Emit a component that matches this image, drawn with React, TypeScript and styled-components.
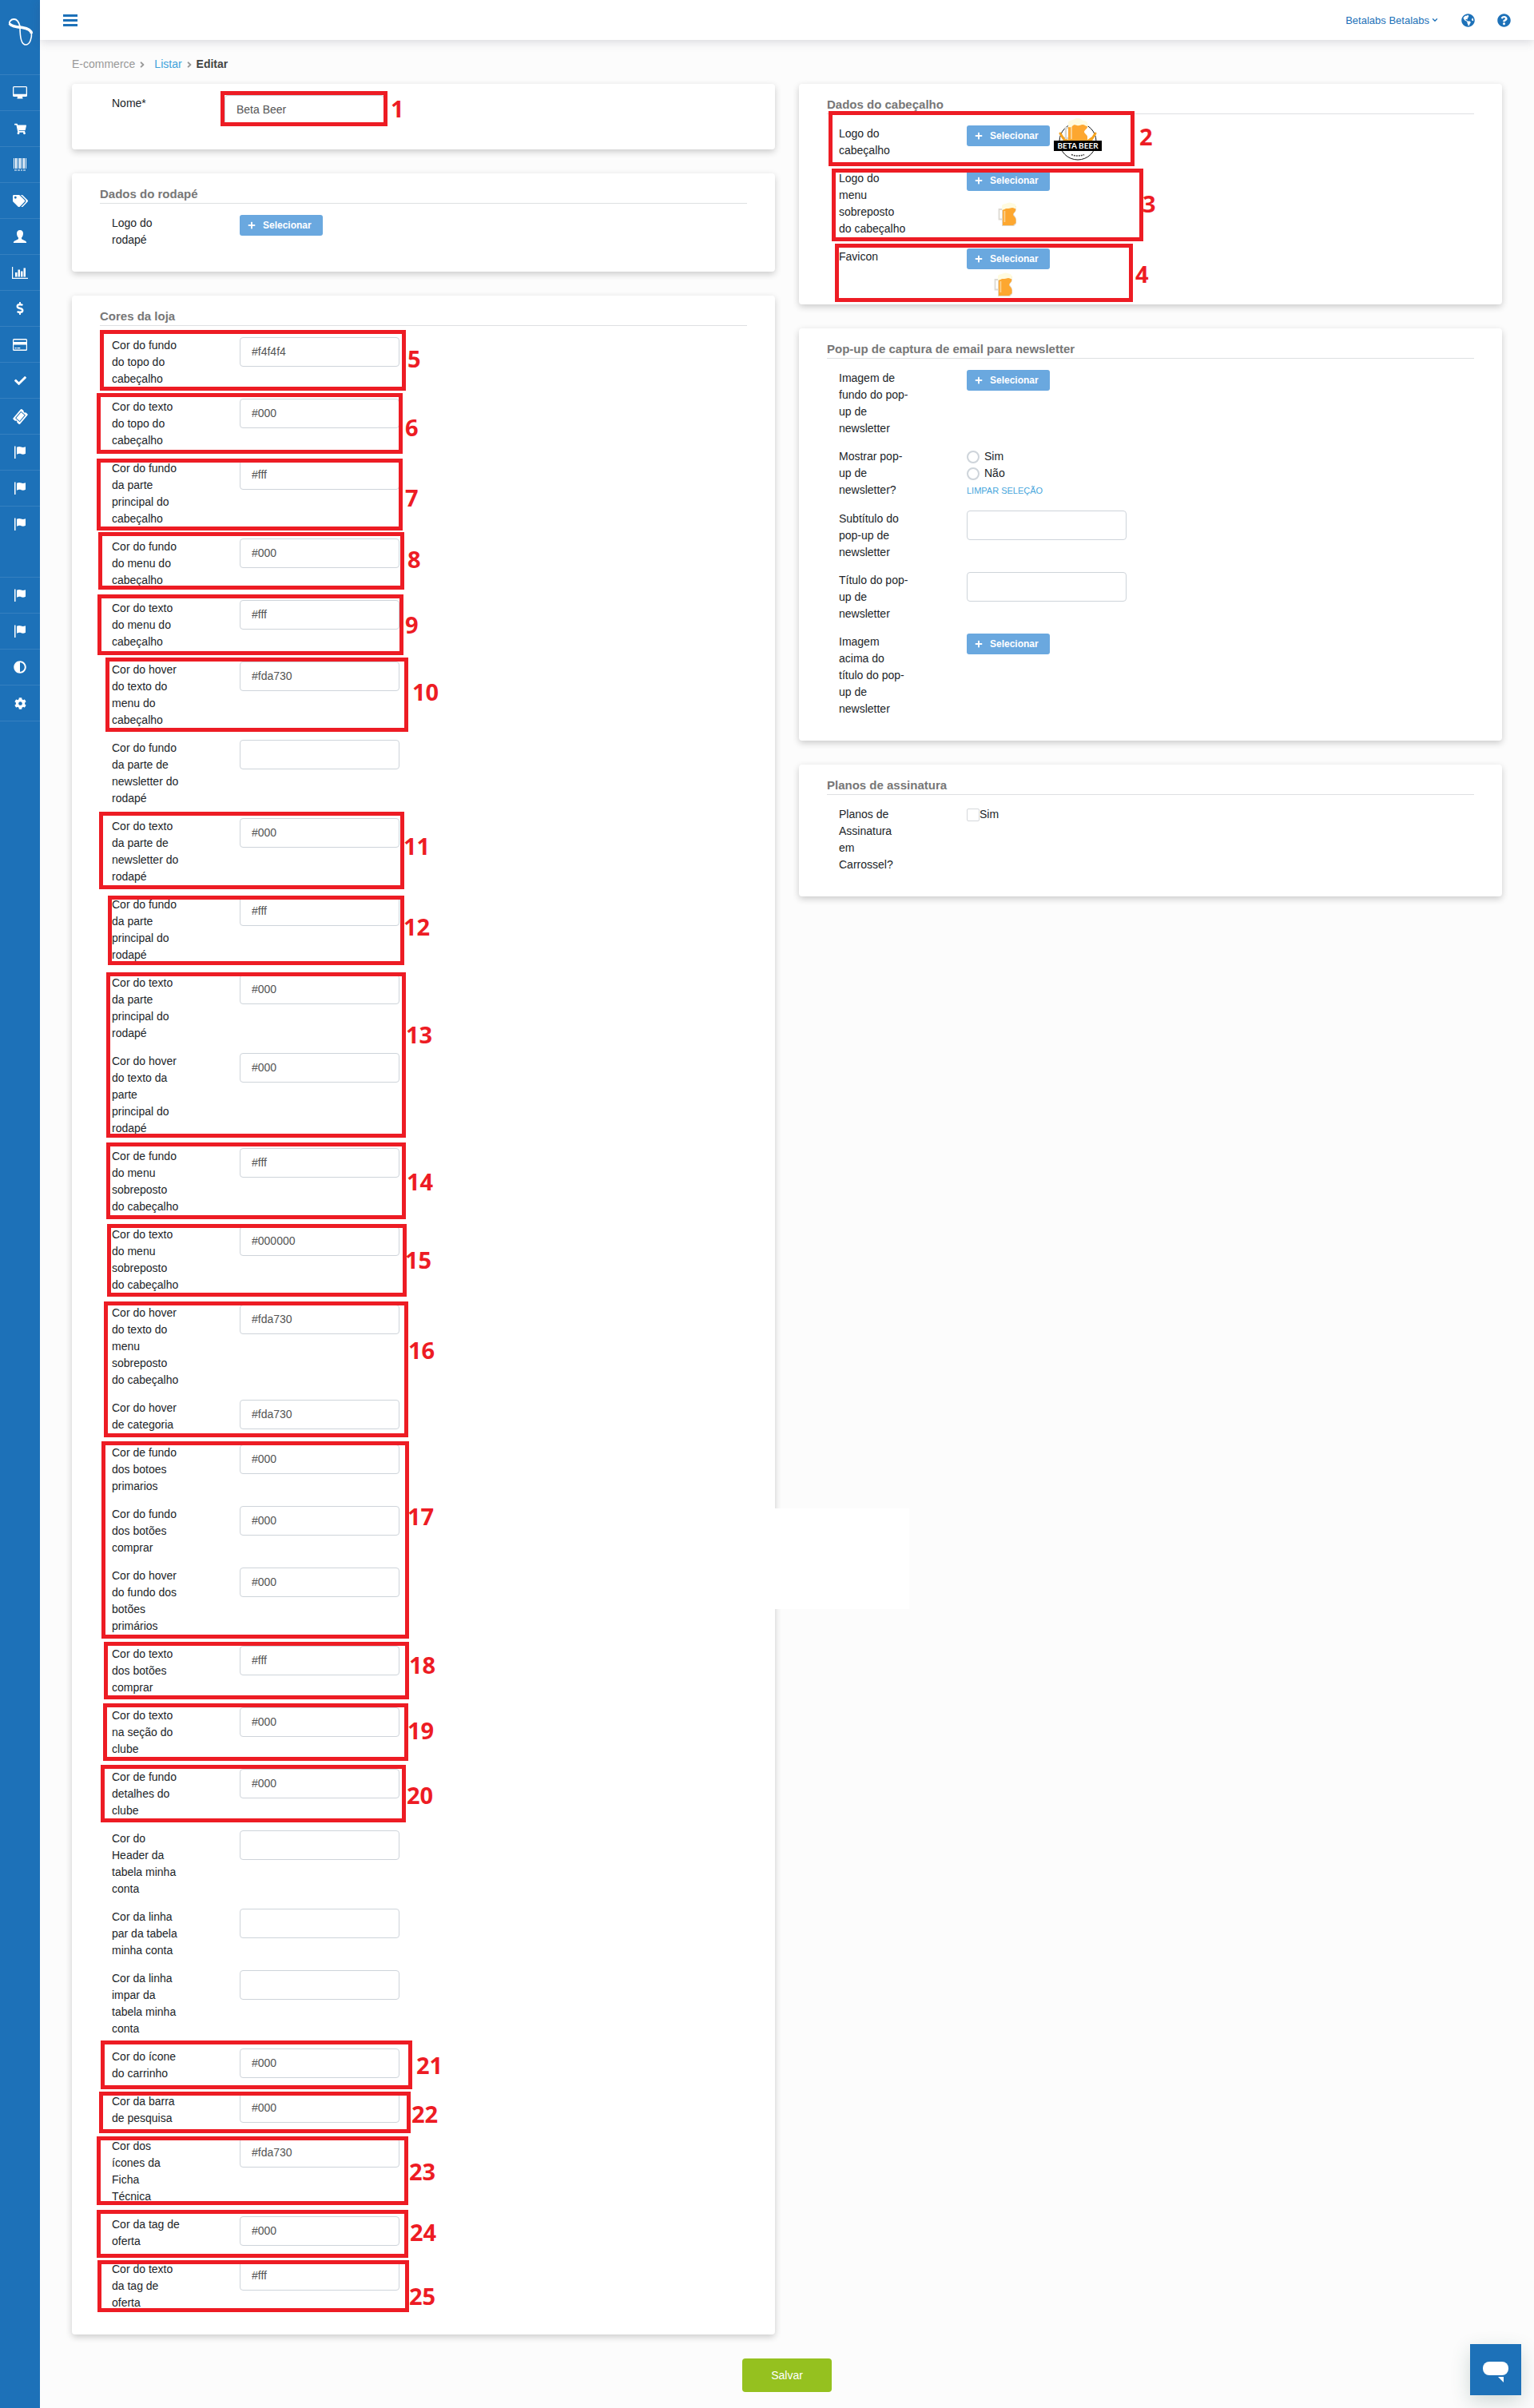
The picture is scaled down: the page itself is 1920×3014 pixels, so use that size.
import React from "react";
import styled, { createGlobalStyle } from "styled-components";
import { ChevronDown } from "lucide-react";
import {
  FaAdjust,
  FaAngleRight,
  FaCheck,
  FaCog,
  FaDollarSign,
  FaGlobeAmericas,
  FaPlus,
  FaQuestionCircle,
  FaShoppingCart,
  FaTags,
  FaTicketAlt,
} from "react-icons/fa";

const BLUE = "#1d71b8";
const RED = "#ed1c24";

const GlobalStyle = createGlobalStyle`
  *, *::before, *::after { box-sizing: border-box; }
  body {
    margin: 0;
    background: #fcfcfc;
    color: #212529;
    font-family: "Liberation Sans", Arial, sans-serif;
    font-size: 14px;
    line-height: 21px;
  }
  button, input { font: inherit; }
`;

/* ---------- shell ---------- */

const Shell = styled.div`
  position: relative;
  display: flex;
  align-items: stretch;
  min-height: 100vh;
`;

const Sidebar = styled.nav`
  flex: 0 0 50px;
  background: ${BLUE};
  color: #fff;
`;

const Brand = styled.a`
  display: block;
  height: 93px;
  svg {
    display: block;
  }
`;

const Menu = styled.ul`
  margin: 0;
  padding: 0;
  list-style: none;
`;

const MenuItem = styled.li<{ $blank?: boolean }>`
  height: ${(p) => (p.$blank ? 44 : 45)}px;
  border-top: ${(p) => (p.$blank ? "0" : "1px solid #3580c0")};
  &:last-child {
    height: 46px;
    border-bottom: 1px solid #3580c0;
  }
`;

const MenuLink = styled.a`
  display: flex;
  align-items: center;
  justify-content: center;
  height: 44px;
  color: #fff;
`;

const Page = styled.div`
  flex: 1;
  min-width: 0;
  display: flex;
  flex-direction: column;
`;

const TopBar = styled.header`
  display: flex;
  align-items: center;
  justify-content: space-between;
  height: 50px;
  padding: 0 29px;
  background: #fff;
  box-shadow: 0 2px 12px rgba(60, 60, 90, 0.2);
`;

const Burger = styled.button`
  display: flex;
  flex-direction: column;
  gap: 3px;
  padding: 0;
  border: 0;
  background: none;
  cursor: pointer;
  span {
    width: 18px;
    height: 3px;
    background: ${BLUE};
  }
`;

const TopLinks = styled.div`
  display: flex;
  align-items: center;
  color: ${BLUE};
`;

const UserMenu = styled.button`
  display: flex;
  align-items: center;
  gap: 2px;
  margin-right: 28px;
  padding: 0;
  border: 0;
  background: none;
  color: ${BLUE};
  font-size: 13px;
`;

const TopIcon = styled.a`
  display: flex;
  color: ${BLUE};
  & + & {
    margin-left: 28px;
  }
`;

const Main = styled.main`
  padding: 20px 40px;
`;

const Crumbs = styled.nav`
  display: flex;
  align-items: center;
  height: 21px;
  margin-bottom: 14px;
  color: #999;
  svg {
    margin: 0 3px;
  }
  a {
    margin-left: 6px;
    color: #3fa2db;
    text-decoration: none;
  }
  strong {
    color: #444;
  }
`;

const Columns = styled.div`
  display: grid;
  grid-template-columns: repeat(2, minmax(0, 1fr));
  gap: 30px;
  align-items: start;
`;

const Column = styled.div`
  display: grid;
  gap: 30px;
`;

/* ---------- panels and rows ---------- */

const Panel = styled.section`
  padding: 0 35px 15px;
  border-radius: 4px;
  background: #fff;
  box-shadow: 0 3px 8px rgba(0, 0, 0, 0.2);
`;

const PanelTitle = styled.h2`
  margin: 0 0 14px;
  padding: 15px 0 1px;
  border-bottom: 1px solid #dee0e2;
  color: #777;
  font-size: 15px;
  line-height: 21px;
`;

const Plain = styled.div`
  padding-top: 14px;
`;

const Row = styled.div<{ $labelCol?: number; $min?: number }>`
  display: grid;
  grid-template-columns: ${(p) => p.$labelCol ?? 160}px 1fr;
  min-height: ${(p) => p.$min ?? 39}px;
  margin-bottom: 14px;
  padding-left: 15px;
`;

const labelStyle = `
  display: block;
  width: 87px;
  white-space: pre-line;
`;

const Label = styled.label`
  ${labelStyle}
`;

const LabelText = styled.div`
  ${labelStyle}
`;

const Control = styled.div`
  position: relative;
  min-width: 0;
`;

const TextInput = styled.input`
  display: block;
  width: 200px;
  max-width: 100%;
  height: 37px;
  padding: 0 14px 1px;
  border: 1px solid #ced4da;
  border-radius: 4px;
  background: #fff;
  color: #555;
`;

const SelectButton = styled.button`
  display: flex;
  align-items: center;
  gap: 9px;
  width: 104px;
  height: 26px;
  padding: 0 10px;
  border: 0;
  border-radius: 3px;
  background: #6aa8df;
  color: #fff;
  font-size: 12px;
  font-weight: bold;
`;

const Preview = styled.span<{ $left: number; $top: number }>`
  position: absolute;
  left: ${(p) => p.$left}px;
  top: ${(p) => p.$top}px;
  svg {
    display: block;
  }
`;

const Choice = styled.label<{ $gap: number }>`
  display: flex;
  align-items: center;
  gap: ${(p) => p.$gap}px;
  height: 21px;
  input {
    appearance: none;
    width: 16px;
    height: 16px;
    margin: 0;
    border: 2px solid #ced4da;
    border-radius: 50%;
    background: #fff;
  }
  input[type="checkbox"] {
    border: 1px solid #d5d8db;
    border-radius: 2px;
  }
`;

const ClearLink = styled.a`
  color: #48a6dc;
  font-size: 11px;
  text-decoration: none;
`;

const Footer = styled.div`
  display: flex;
  justify-content: center;
  margin-top: 30px;
`;

const SaveButton = styled.button`
  width: 112px;
  height: 42px;
  border: 0;
  border-radius: 4px;
  background: #95c11f;
  color: #fff;
`;

const ChatButton = styled.button`
  position: fixed;
  right: 16px;
  bottom: 16px;
  width: 64px;
  height: 64px;
  padding: 0;
  border: 0;
  background: ${BLUE};
  box-shadow: 0 8px 24px rgba(30, 80, 70, 0.2);
  svg {
    display: block;
  }
`;

/* ---------- numbered marks drawn over the page ---------- */

const Mark = styled.div<{ $x: number; $y: number; $w: number; $h: number }>`
  position: absolute;
  left: ${(p) => p.$x}px;
  top: ${(p) => p.$y}px;
  width: ${(p) => p.$w}px;
  height: ${(p) => p.$h}px;
  border: 5px solid ${RED};
  pointer-events: none;
`;

const MarkNumber = styled.span<{ $x: number; $y: number }>`
  position: absolute;
  left: ${(p) => p.$x}px;
  top: ${(p) => p.$y}px;
  color: ${RED};
  font: bold 29px/21px "Open Sans", "Noto Sans", sans-serif;
`;

const BlankPatch = styled.div`
  position: absolute;
  left: 960px;
  top: 1888px;
  width: 178px;
  height: 126px;
  background: #fff;
`;

/* left, top, right, bottom of the frame; left and top of the number */
const marks: number[][] = [
  [276, 114, 485, 158, 489, 125],
  [1037, 139, 1420, 208, 1426, 160],
  [1041, 211, 1431, 302, 1430, 244],
  [1045, 305, 1418, 378, 1421, 332],
  [125, 413, 508, 489, 510, 438],
  [121, 492, 504, 568, 507, 524],
  [121, 574, 504, 664, 507, 612],
  [123, 666, 506, 738, 510, 689],
  [122, 744, 505, 820, 507, 771],
  [132, 823, 511, 916, 516, 855],
  [124, 1016, 506, 1113, 505, 1048],
  [135, 1121, 506, 1208, 505, 1149],
  [133, 1217, 508, 1424, 508, 1284],
  [133, 1430, 508, 1526, 509, 1468],
  [134, 1532, 509, 1623, 507, 1566],
  [130, 1629, 511, 1799, 511, 1679],
  [127, 1804, 512, 2051, 510, 1887],
  [130, 2055, 512, 2127, 512, 2073],
  [129, 2132, 511, 2204, 510, 2155],
  [126, 2209, 508, 2281, 509, 2236],
  [126, 2554, 516, 2615, 521, 2574],
  [124, 2618, 514, 2670, 515, 2635],
  [121, 2674, 511, 2760, 512, 2707],
  [121, 2766, 511, 2826, 513, 2783],
  [122, 2829, 512, 2894, 512, 2863],
];

/* ---------- drawings ---------- */

const BrandMark = () => (
  <svg width="50" height="62" viewBox="0 0 50 62" fill="none" stroke="#fff">
    <path d="M25 33C23.500 27 21 24 17.500 24C13.500 24 11 27.500 12 30C13 32.500 17 33 22 34" strokeWidth="1.800" />
    <path d="M12 29.500C14 33 20 33.500 28 34.500C34 35.500 39 37.500 39.500 42" strokeWidth="3.400" />
    <path d="M25 34C25 44 26.500 56 32 56C37.500 56 40 48 39.500 40" strokeWidth="1.600" />
  </svg>
);

const Desktop = () => (
  <svg width="18" height="16" viewBox="0 0 18 16" fill="currentColor">
    <path fillRule="evenodd" d="M1.500 0h15A1.500 1.500 0 0 1 18 1.500v10a1.500 1.500 0 0 1-1.500 1.500H12l.6 2.400H5.400L6 13H1.500A1.500 1.500 0 0 1 0 11.500v-10A1.500 1.500 0 0 1 1.500 0zM1.300 1.300v8.400h15.400V1.300z" />
  </svg>
);

const Barcode = () => (
  <svg width="18" height="16" viewBox="0 0 18 16" fill="currentColor">
    <path d="M1 0h1v13H1zM3 0h2v13H3zM6 0h1v13H6zM8 0h2v13H8zM11 0h1v13h-1zM13 0h2v13h-2zM16 0h1v13h-1zM2 14.500h3v1H2zM6 14.500h3v1H6zM10 14.500h2v1h-2zM13 14.500h3v1h-3z" />
  </svg>
);

const Person = () => (
  <svg width="18" height="16" viewBox="0 0 18 16" fill="currentColor">
    <path d="M9 0c2.600 0 4 1.700 4 4.200 0 2-.8 4-2 5.200v1.300c0 .6 1.500 1.300 3.500 2.200 1.800.8 2.700 1.300 2.700 3.100H.8c0-1.800.9-2.300 2.700-3.100 2-.9 3.500-1.600 3.500-2.200V9.400C5.800 8.200 5 6.200 5 4.200 5 1.700 6.400 0 9 0z" />
  </svg>
);

const Bars = () => (
  <svg width="20" height="15" viewBox="0 0 20 15" fill="currentColor">
    <path d="M0 0h1.200v13.700H20V15H0zM4 7h2.500v5.500H4zM7.500 3.500H10v9H7.500zM11 5.500h2.500v7H11zM14.500 1.500H17v11h-2.500z" />
  </svg>
);

const Card = () => (
  <svg width="18" height="15" viewBox="0 0 18 15" fill="currentColor">
    <path fillRule="evenodd" d="M1.500 0h15A1.500 1.500 0 0 1 18 1.500v12a1.500 1.500 0 0 1-1.500 1.500h-15A1.500 1.500 0 0 1 0 13.500v-12A1.500 1.500 0 0 1 1.500 0zM1.200 1.500V4h15.600V1.500zM1.200 7.500v6h15.600v-6zM2.500 11h2.200v1.200H2.500zM5.500 11h3.800v1.200H5.500z" />
  </svg>
);

const Flag = () => (
  <svg width="16" height="16" viewBox="0 0 16 16" fill="currentColor">
    <path d="M1 .5h1.500V16H1zM4 1.800C6 .6 8 .7 9.500 1.500c1.800.8 3.500.4 5.500-.3v8.600c-2 .9-3.700 1.200-5.500.4C8 9.500 6 9.500 4 10.700z" />
  </svg>
);

const Mug = ({ size = 30 }: { size?: number }) => (
  <svg width={size} height={size} viewBox="0 0 30 30">
    <path d="M7 9H2.500v12.500H7" fill="none" stroke="#ddd9d2" strokeWidth="1.800" />
    <path d="M6 5h18v4c0 3-3 4-3 6s3 3.500 3 7v5l-3 3H6z" fill="#e2d8c8" />
    <path d="M7 6h16v4c0 2.500-3 3.500-3 5.500s3.500 3 3.500 7V26L20 29H7z" fill="#fda730" />
    <path d="M8.500 11h1.800v14H8.500z" fill="#fcd08c" />
    <path d="M6 9.500V4.500C7 2 10 2.500 12 1.500S16 0 18 1s5 .5 5.500 3.500L24 8c-2 .8-3-1-5-1s-2.500 1-5 1-3-.5-4 .5-3 1.500-4 1z" fill="#fffbe0" />
  </svg>
);

const Badge = () => (
  <svg width="62" height="53" viewBox="0 0 62 53">
    <circle cx="31" cy="29" r="23" fill="#fff" stroke="#111" strokeWidth="1" />
    <path d="M9 19l5 8M53 19l-5 8M12 24l7 5M50 24l-7 5" stroke="#f5a21f" strokeWidth="3" strokeLinecap="round" />
    <path d="M20 12h-4v13h5" fill="none" stroke="#d8d8d4" strokeWidth="2.500" />
    <path d="M19 6h24v5c0 2-4 4-4 6s4 4 4 6v5H19z" fill="#fda730" />
    <path d="M22 10h2v16h-2z" fill="#fcd08c" />
    <path d="M19 11V5c2-3 5-2 8-4s7-1 9 1 6 0 7 4l1 4c-3 1-4-2-7-2s-4 2-7 1-4-1-6 1-3 1-5 1z" fill="#fffbe0" />
    <rect x="1" y="28" width="60" height="13" fill="#000" />
    <text x="31" y="38" textAnchor="middle" fill="#fff" fontFamily="Lato, sans-serif" fontWeight="bold" fontSize="10">
      BETA BEER
    </text>
    <path d="M23 45.500c5 2 11 2 16 0" fill="none" stroke="#444" strokeWidth="1.500" strokeDasharray="2 1" />
  </svg>
);

/* ---------- content ---------- */

const menu: { name: string; icon: React.ReactNode }[] = [
  { name: "Painel", icon: <Desktop /> },
  { name: "Pedidos", icon: <FaShoppingCart size={15} /> },
  { name: "Produtos", icon: <Barcode /> },
  { name: "Etiquetas", icon: <FaTags size={19} /> },
  { name: "Clientes", icon: <Person /> },
  { name: "Relatórios", icon: <Bars /> },
  { name: "Financeiro", icon: <FaDollarSign size={16} /> },
  { name: "Pagamentos", icon: <Card /> },
  { name: "Aprovações", icon: <FaCheck size={15} /> },
  { name: "Cupons", icon: <FaTicketAlt size={17} transform="rotate(-50)" /> },
  { name: "Marcador 1", icon: <Flag /> },
  { name: "Marcador 2", icon: <Flag /> },
  { name: "Marcador 3", icon: <Flag /> },
  { name: "", icon: null },
  { name: "Marcador 4", icon: <Flag /> },
  { name: "Marcador 5", icon: <Flag /> },
  { name: "Aparência", icon: <FaAdjust size={16} /> },
  { name: "Configurações", icon: <FaCog size={15} /> },
];

const colors: [string, string][] = [
  ["Cor do fundo do topo do cabeçalho", "#f4f4f4"],
  ["Cor do texto do topo do cabeçalho", "#000"],
  ["Cor do fundo da parte principal do cabeçalho", "#fff"],
  ["Cor do fundo do menu do cabeçalho", "#000"],
  ["Cor do texto do menu do cabeçalho", "#fff"],
  ["Cor do hover do texto do menu do cabeçalho", "#fda730"],
  ["Cor do fundo da parte de newsletter do rodapé", ""],
  ["Cor do texto da parte de newsletter do rodapé", "#000"],
  ["Cor do fundo da parte principal do rodapé", "#fff"],
  ["Cor do texto da parte principal do rodapé", "#000"],
  ["Cor do hover do texto da parte principal do rodapé", "#000"],
  ["Cor de fundo do menu sobreposto do cabeçalho", "#fff"],
  ["Cor do texto do menu sobreposto do cabeçalho", "#000000"],
  ["Cor do hover do texto do menu sobreposto do cabeçalho", "#fda730"],
  ["Cor do hover de categoria", "#fda730"],
  ["Cor de fundo dos botoes primarios", "#000"],
  ["Cor do fundo dos botões comprar", "#000"],
  ["Cor do hover do fundo dos botões primários", "#000"],
  ["Cor do texto dos botões comprar", "#fff"],
  ["Cor do texto na seção do clube", "#000"],
  ["Cor de fundo detalhes do clube", "#000"],
  ["Cor do Header da tabela minha conta", ""],
  ["Cor da linha par da tabela minha conta", ""],
  ["Cor da linha impar da tabela minha conta", ""],
  ["Cor do ícone do carrinho", "#000"],
  ["Cor da barra de pesquisa", "#000"],
  ["Cor dos ícones da Ficha\nTécnica", "#fda730"],
  ["Cor da tag de oferta", "#000"],
  ["Cor do texto da tag de oferta", "#fff"],
];

interface FieldProps {
  id: string;
  label: string;
  value?: string;
  labelCol?: number;
}

const Field = ({ id, label, value = "", labelCol }: FieldProps) => (
  <Row $labelCol={labelCol}>
    <Label htmlFor={id}>{label}</Label>
    <Control>
      <TextInput id={id} type="text" defaultValue={value} />
    </Control>
  </Row>
);

interface FileFieldProps {
  id: string;
  label: string;
  min?: number;
  children?: React.ReactNode;
}

const FileField = ({ id, label, min, children }: FileFieldProps) => (
  <Row $min={min}>
    <Label htmlFor={id}>{label}</Label>
    <Control>
      <SelectButton id={id} type="button">
        <FaPlus size={10} />
        Selecionar
      </SelectButton>
      {children}
    </Control>
  </Row>
);

export default function App() {
  return (
    <>
      <GlobalStyle />
      <Shell>
        <Sidebar>
          <Brand href="#" aria-label="Betalabs">
            <BrandMark />
          </Brand>
          <Menu>
            {menu.map((item, i) => (
              <MenuItem key={i} $blank={!item.icon}>
                {item.icon && (
                  <MenuLink href="#" aria-label={item.name}>
                    {item.icon}
                  </MenuLink>
                )}
              </MenuItem>
            ))}
          </Menu>
        </Sidebar>

        <Page>
          <TopBar>
            <Burger type="button" aria-label="Menu">
              <span />
              <span />
              <span />
            </Burger>
            <TopLinks>
              <UserMenu type="button">
                Betalabs Betalabs
                <ChevronDown size={10} strokeWidth={3} />
              </UserMenu>
              <TopIcon href="#" aria-label="Loja">
                <FaGlobeAmericas size={17} />
              </TopIcon>
              <TopIcon href="#" aria-label="Ajuda">
                <FaQuestionCircle size={17} />
              </TopIcon>
            </TopLinks>
          </TopBar>

          <Main>
            <Crumbs>
              E-commerce
              <FaAngleRight size={12} />
              <a href="#">Listar</a>
              <FaAngleRight size={12} />
              <strong>Editar</strong>
            </Crumbs>

            <Columns>
              <Column>
                <Panel>
                  <Plain>
                    <Field id="nome" label="Nome*" value="Beta Beer" labelCol={141} />
                  </Plain>
                </Panel>
                <Panel>
                  <PanelTitle>Dados do rodapé</PanelTitle>
                  <FileField id="logo-rodape" label="Logo do rodapé" />
                </Panel>
                <Panel>
                  <PanelTitle>Cores da loja</PanelTitle>
                  {colors.map(([label, value], i) => (
                    <Field key={label} id={`cor-${i}`} label={label} value={value} />
                  ))}
                </Panel>
              </Column>

              <Column>
                <Panel>
                  <PanelTitle>Dados do cabeçalho</PanelTitle>
                  <FileField id="logo-cabecalho" label="Logo do cabeçalho">
                    <Preview $left={108} $top={-9}>
                      <Badge />
                    </Preview>
                  </FileField>
                  <FileField id="logo-menu" label="Logo do menu sobreposto do cabeçalho">
                    <Preview $left={38} $top={40}>
                      <Mug />
                    </Preview>
                  </FileField>
                  <FileField id="favicon" label="Favicon" min={41}>
                    <Preview $left={33} $top={30}>
                      <Mug />
                    </Preview>
                  </FileField>
                </Panel>

                <Panel>
                  <PanelTitle>Pop-up de captura de email para newsletter</PanelTitle>
                  <FileField id="popup-fundo" label="Imagem de fundo do pop-up de newsletter" />
                  <Row role="radiogroup" aria-labelledby="mostrar-popup">
                    <LabelText id="mostrar-popup">Mostrar pop-up de newsletter?</LabelText>
                    <Control>
                      <Choice $gap={6}>
                        <input type="radio" name="popup" />
                        Sim
                      </Choice>
                      <Choice $gap={6}>
                        <input type="radio" name="popup" />
                        Não
                      </Choice>
                      <ClearLink href="#">LIMPAR SELEÇÃO</ClearLink>
                    </Control>
                  </Row>
                  <Field id="popup-subtitulo" label="Subtítulo do pop-up de newsletter" />
                  <Field id="popup-titulo" label="Título do pop-up de newsletter" />
                  <FileField id="popup-imagem" label="Imagem acima do título do pop-up de newsletter" />
                </Panel>

                <Panel>
                  <PanelTitle>Planos de assinatura</PanelTitle>
                  <Row>
                    <LabelText>Planos de Assinatura em Carrossel?</LabelText>
                    <Control>
                      <Choice $gap={0}>
                        <input type="checkbox" />
                        Sim
                      </Choice>
                    </Control>
                  </Row>
                </Panel>
              </Column>
            </Columns>

            <Footer>
              <SaveButton type="submit">Salvar</SaveButton>
            </Footer>
          </Main>
        </Page>

        <BlankPatch />
        {marks.map(([x, y, right, bottom, nx, ny], i) => (
          <React.Fragment key={i}>
            <Mark $x={x} $y={y} $w={right - x} $h={bottom - y} />
            <MarkNumber $x={nx} $y={ny}>
              {i + 1}
            </MarkNumber>
          </React.Fragment>
        ))}
      </Shell>

      <ChatButton type="button" aria-label="Abrir chat">
        <svg width="64" height="64" viewBox="0 0 64 64" fill="#fff">
          <rect x="16" y="22" width="32" height="17" rx="8" />
          <path d="M35 41h7v7z" />
        </svg>
      </ChatButton>
    </>
  );
}
